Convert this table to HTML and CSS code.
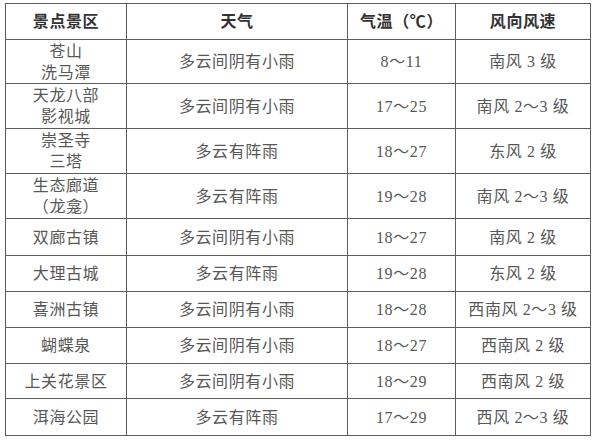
FILE: index.html
```html
<!DOCTYPE html>
<html lang="zh-CN">
<head>
<meta charset="utf-8">
<link rel="stylesheet" href="styles.css">
</head>
<body>
<table class="weather">
  <colgroup>
    <col class="c1"><col class="c2"><col class="c3"><col class="c4">
  </colgroup>
  <thead>
    <tr class="h"><th>景点景区</th><th>天气</th><th>气温（℃）</th><th>风向风速</th></tr>
  </thead>
  <tbody>
    <tr class="r2a"><td>苍山<br>洗马潭</td><td>多云间阴有小雨</td><td>8～11</td><td>南风 3 级</td></tr>
    <tr class="r2"><td>天龙八部<br>影视城</td><td>多云间阴有小雨</td><td>17～25</td><td>南风 2～3 级</td></tr>
    <tr class="r2"><td>崇圣寺<br>三塔</td><td>多云有阵雨</td><td>18～27</td><td>东风 2 级</td></tr>
    <tr class="r2"><td>生态廊道<br>（龙龛）</td><td>多云有阵雨</td><td>19～28</td><td>南风 2～3 级</td></tr>
    <tr class="r1a"><td>双廊古镇</td><td>多云间阴有小雨</td><td>18～27</td><td>南风 2 级</td></tr>
    <tr class="r1"><td>大理古城</td><td>多云有阵雨</td><td>19～28</td><td>东风 2 级</td></tr>
    <tr class="r1"><td>喜洲古镇</td><td>多云间阴有小雨</td><td>18～28</td><td>西南风 2～3 级</td></tr>
    <tr class="r1"><td>蝴蝶泉</td><td>多云间阴有小雨</td><td>18～27</td><td>西南风 2 级</td></tr>
    <tr class="r1b"><td>上关花景区</td><td>多云间阴有小雨</td><td>18～29</td><td>西南风 2 级</td></tr>
    <tr class="r1a"><td>洱海公园</td><td>多云有阵雨</td><td>17～29</td><td>西风 2～3 级</td></tr>
  </tbody>
</table>
</body>
</html>
```
FILE: styles.css
```css
html, body {
  margin: 0;
  padding: 0;
  background: #fff;
}
body {
  padding: 3px 0 0 5px;
}
.weather {
  border-collapse: collapse;
  table-layout: fixed;
  width: 585px;
  font-family: "Liberation Serif", "Noto Sans CJK SC", serif;
  font-size: 16px;
  color: #575757;
}
.c1 { width: 121px; }
.c2 { width: 221px; }
.c3 { width: 108px; }
.c4 { width: 135px; }
.weather th, .weather td {
  border: 1px solid #5c5c5c;
  text-align: center;
  vertical-align: middle;
  padding: 0;
  line-height: 21px;
  letter-spacing: 0.6px;
}
.weather th {
  font-weight: 700;
  color: #333;
}
.h { height: 36px; }
.r2a { height: 44px; }
.r2 { height: 45px; }
.r1 { height: 36px; }
.r1a { height: 37px; }
.r1b { height: 35px; }
```
